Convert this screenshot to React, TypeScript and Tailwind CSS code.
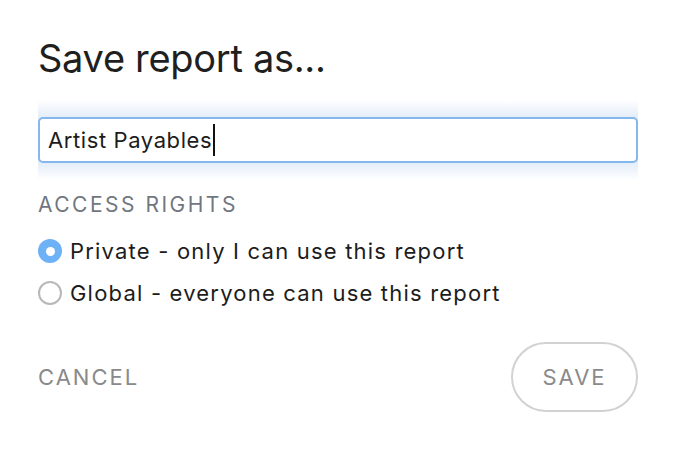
import React, { useState } from 'react';

type Access = 'private' | 'global';

const options: { value: Access; label: string }[] = [
  { value: 'private', label: 'Private - only I can use this report' },
  { value: 'global', label: 'Global - everyone can use this report' },
];

export default function App() {
  const [name] = useState('Artist Payables');
  const [access, setAccess] = useState<Access>('private');

  return (
    <div className="w-[676px] h-[454px] bg-white font-['Inter','Liberation_Sans',sans-serif] text-[#1c1c1c]">
      <div className="px-[38px] pt-[35px]">
        <h1 className="text-[38px] leading-[46px] font-normal tracking-[-0.3px] text-[#1f1f1f]">Save report as...</h1>

        {/* name field with soft focus glow */}
        <div className="mt-[19px] py-[17px] bg-[linear-gradient(to_bottom,#ffffff,#e4edf9_17px,#e4edf9_calc(100%_-_17px),#ffffff)]">
          <div className="h-[46px] bg-white border-2 border-[#86b6ee] rounded-[5px] flex items-center px-[8px] text-[22px] tracking-[0.6px]">
            <span>{name}</span>
            <span className="inline-block w-[2px] h-[32px] bg-[#111] ml-[1px]"></span>
          </div>
        </div>

        <div className="mt-[13px] text-[21px] leading-[24px] tracking-[2.5px] text-[#707780]">ACCESS RIGHTS</div>

        <div className="mt-[22px] flex flex-col gap-[18px]">
          {options.map((opt) => {
            const checked = access === opt.value;
            return (
              <label
                key={opt.value}
                onClick={() => setAccess(opt.value)}
                className="flex items-center gap-[8px] cursor-pointer text-[22px] leading-[24px] tracking-[1.2px]"
              >
                {checked ? (
                  <span className="shrink-0 w-[24px] h-[24px] rounded-full bg-[#6db1f6] flex items-center justify-center">
                    <span className="w-[9px] h-[9px] rounded-full bg-white"></span>
                  </span>
                ) : (
                  <span className="shrink-0 w-[24px] h-[24px] rounded-full border-2 border-[#b8b8b8] bg-white"></span>
                )}
                <span>{opt.label}</span>
              </label>
            );
          })}
        </div>

        <div className="mt-[37px] flex items-center justify-between">
          <button className="text-[22px] tracking-[2px] text-[#8a8a8a]">CANCEL</button>
          <button className="w-[127px] h-[70px] rounded-full border-2 border-[#d2d2d2] text-[22px] tracking-[2px] text-[#8a8a8a]">
            SAVE
          </button>
        </div>
      </div>
    </div>
  );
}
